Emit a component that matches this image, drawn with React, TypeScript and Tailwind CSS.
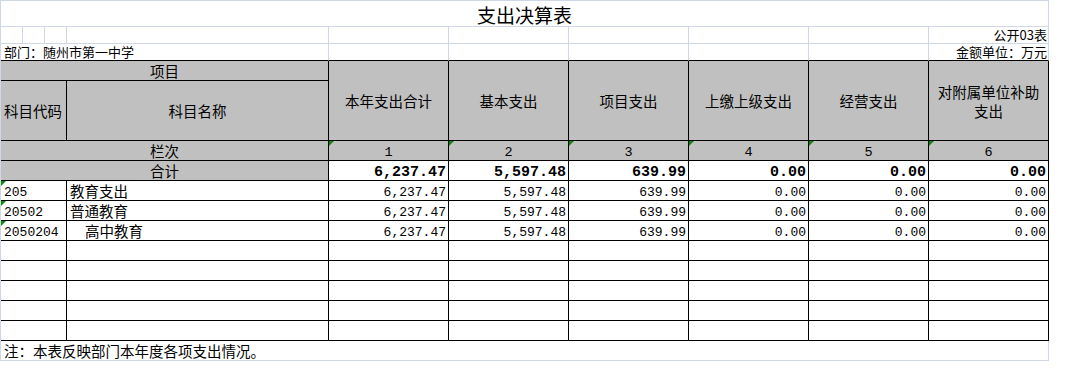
import React from "react";

const CJK = "font-['Noto_Sans_CJK_SC','Noto_Sans',sans-serif]";
const MONO = "font-['Liberation_Mono','Noto_Sans_CJK_SC',monospace]";

const LIGHT = "border-r border-b border-[#d0d7e5]";
const DARK = "border-r border-b border-black";
const ROW3 = "border-r border-b border-r-[#d0d7e5] border-b-black";

const Tri = () => (
  <span className="absolute left-0 top-0 h-0 w-0 border-t-[5px] border-r-[5px] border-t-[#0a8a0a] border-r-transparent" />
);

type Row = { code: string; name: string; indent?: boolean; v: string[] };

const rows: Row[] = [
  { code: "205", name: "教育支出", v: ["6,237.47", "5,597.48", "639.99", "0.00", "0.00", "0.00"] },
  { code: "20502", name: "普通教育", v: ["6,237.47", "5,597.48", "639.99", "0.00", "0.00", "0.00"] },
  { code: "2050204", name: "高中教育", indent: true, v: ["6,237.47", "5,597.48", "639.99", "0.00", "0.00", "0.00"] },
];

const totals = ["6,237.47", "5,597.48", "639.99", "0.00", "0.00", "0.00"];

const headers = ["本年支出合计", "基本支出", "项目支出", "上缴上级支出", "经营支出", "对附属单位补助支出"];

export default function App() {
  return (
    <div className="min-h-[378px] w-[1078px] bg-white text-black">
      <div
        className={`grid w-[1049px] grid-cols-[22px_22px_22px_262px_repeat(6,120px)] grid-rows-[26px_17px_17px_repeat(15,20px)] border-l border-t border-[#d0d7e5] ${CJK}`}
      >
        {/* Row 1: title */}
        <div className={`col-span-10 flex items-center justify-center pt-[3px] text-[19px] leading-[22px] ${LIGHT}`}>
          支出决算表
        </div>

        {/* Row 2 */}
        <div className={LIGHT} />
        <div className={LIGHT} />
        <div className={LIGHT} />
        <div className={LIGHT} />
        <div className={LIGHT} />
        <div className={LIGHT} />
        <div className={LIGHT} />
        <div className={LIGHT} />
        <div className={LIGHT} />
        <div className={`flex items-center justify-end pr-[1px] text-[13px] leading-[16px] ${LIGHT}`}>公开03表</div>

        {/* Row 3 */}
        <div className={`col-span-4 flex items-center pl-[3px] text-[13px] leading-[16px] ${ROW3}`}>
          部门：随州市第一中学
        </div>
        <div className={ROW3} />
        <div className={ROW3} />
        <div className={ROW3} />
        <div className={ROW3} />
        <div className={ROW3} />
        <div className={`flex items-center justify-end pr-[1px] text-[13px] leading-[16px] ${ROW3}`}>金额单位：万元</div>

        {/* Header */}
        <div className={`col-span-4 flex items-center justify-center bg-[#c0c0c0] text-[14.5px] leading-[19px] ${DARK}`}>
          项目
        </div>
        {headers.map((h) => (
          <div
            key={h}
            className={`row-span-4 flex items-center justify-center whitespace-normal bg-[#c0c0c0] px-[6px] text-center text-[14.5px] leading-[19px] ${DARK}`}
          >
            {h}
          </div>
        ))}
        <div className={`col-span-3 row-span-3 flex items-center pl-[3px] bg-[#c0c0c0] text-[14.5px] leading-[19px] ${DARK}`}>
          科目代码
        </div>
        <div className={`row-span-3 flex items-center justify-center bg-[#c0c0c0] text-[14.5px] leading-[19px] ${DARK}`}>
          科目名称
        </div>

        {/* 栏次 */}
        <div className={`col-span-4 flex items-center justify-center bg-[#c0c0c0] text-[14.5px] leading-[19px] ${DARK}`}>
          栏次
        </div>
        {[1, 2, 3, 4, 5, 6].map((n) => (
          <div
            key={n}
            className={`relative flex items-center justify-center bg-[#c0c0c0] pt-[4px] text-[13.5px] leading-[16px] ${MONO} ${DARK}`}
          >
            <Tri />
            {n}
          </div>
        ))}

        {/* 合计 */}
        <div className={`col-span-4 flex items-center justify-center bg-[#c0c0c0] text-[14.5px] leading-[19px] ${DARK}`}>
          合计
        </div>
        {totals.map((t, i) => (
          <div
            key={i}
            className={`flex items-center justify-end pr-[2px] pt-[5px] text-[15px] font-bold leading-[16px] ${MONO} ${DARK}`}
          >
            {t}
          </div>
        ))}

        {/* Data rows */}
        {rows.map((r) => (
          <React.Fragment key={r.code}>
            <div className={`relative col-span-3 flex items-center pl-[3px] pt-[4px] text-[13px] leading-[16px] ${MONO} ${DARK}`}>
              <Tri />
              {r.code}
            </div>
            <div
              className={`flex items-center text-[14.5px] leading-[19px] ${r.indent ? "pl-[18px]" : "pl-[3px]"} ${DARK}`}
            >
              {r.name}
            </div>
            {r.v.map((v, i) => (
              <div key={i} className={`flex items-center justify-end pr-[2px] pt-[5px] text-[13px] leading-[16px] ${MONO} ${DARK}`}>
                {v}
              </div>
            ))}
          </React.Fragment>
        ))}

        {/* Blank rows */}
        {[0, 1, 2, 3, 4].map((k) => (
          <React.Fragment key={k}>
            <div className={`col-span-3 ${DARK}`} />
            <div className={DARK} />
            <div className={DARK} />
            <div className={DARK} />
            <div className={DARK} />
            <div className={DARK} />
            <div className={DARK} />
            <div className={DARK} />
          </React.Fragment>
        ))}

        {/* Footnote */}
        <div className={`col-span-10 flex items-center pl-[3px] text-[14.5px] leading-[19px] ${LIGHT}`}>
          注：本表反映部门本年度各项支出情况。
        </div>
      </div>
    </div>
  );
}
